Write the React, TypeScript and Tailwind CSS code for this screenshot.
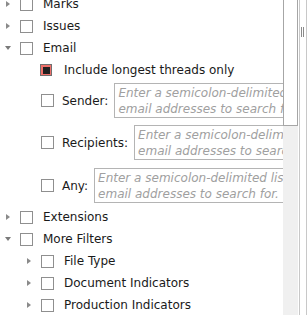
const labelFont = { fontFamily: '"DejaVu Sans", Verdana, sans-serif' }

function Arrow({ open }: { open?: boolean }) {
  if (open) {
    return (
      <span className="ml-[1px] inline-block h-0 w-0 border-l-[3.5px] border-r-[3.5px] border-t-[4px] border-l-transparent border-r-transparent border-t-[#7a7a7a]" />
    )
  }
  return (
    <span className="ml-[2px] inline-block h-0 w-0 border-b-[3.5px] border-l-[4px] border-t-[3.5px] border-b-transparent border-l-[#8a8a8a] border-t-transparent" />
  )
}

function Box({ checked }: { checked?: boolean }) {
  if (checked) {
    return (
      <span className="flex h-[12px] w-[12px] shrink-0 items-center justify-center border border-[#707070] bg-[#f0706a]">
        <span className="h-[7px] w-[7px] bg-[#202020]" />
      </span>
    )
  }
  return <span className="h-[13px] w-[13px] shrink-0 border border-[#8f8f8f] bg-white" />
}

function TreeRow({ label, level = 0, open, arrow = true }: { label: string; level?: number; open?: boolean; arrow?: boolean }) {
  return (
    <div className="flex h-[22px] items-center" style={{ paddingLeft: 4 + level * 21 }}>
      <span className="flex w-[16px] items-center">{arrow && <Arrow open={open} />}</span>
      <Box />
      <span className="ml-[10px] whitespace-nowrap text-[12px] text-[#1a1a1a]" style={labelFont}>
        {label}
      </span>
    </div>
  )
}

function EmailField({ label, className }: { label: string; className: string }) {
  return (
    <div className={`flex items-center pl-[41px] ${className}`}>
      <Box />
      <span className="ml-[8px] mr-[6px] whitespace-nowrap text-[12px] text-[#1a1a1a]" style={labelFont}>
        {label}
      </span>
      <div className="h-[35px] w-[240px] shrink-0 border border-[#b4b4b4] bg-white px-[3px] pt-[1px]">
        <p className="whitespace-nowrap text-[12px] italic leading-[16px] text-[#a0a0a0]" style={labelFont}>
          Enter a semicolon-delimited list of
          <br />
          email addresses to search for.
        </p>
      </div>
    </div>
  )
}

export default function App() {
  return (
    <div className="flex h-[315px] w-[307px] overflow-hidden bg-white">
      <div className="w-[283px] shrink-0 overflow-hidden">
        <div className="mt-[-7px]">
          <TreeRow label="Marks" />
          <TreeRow label="Issues" />
          <TreeRow label="Email" open />
          <div className="flex h-[22px] items-center pl-[40px]">
            <Box checked />
            <span className="ml-[12px] whitespace-nowrap text-[12px] text-[#1a1a1a]" style={labelFont}>
              Include longest threads only
            </span>
          </div>
          <EmailField label="Sender:" className="mt-[2px]" />
          <EmailField label="Recipients:" className="mt-[7px]" />
          <EmailField label="Any:" className="mt-[8px]" />
          <div className="mt-[3px]">
            <TreeRow label="Extensions" />
            <TreeRow label="More Filters" open />
            <TreeRow label="File Type" level={1} />
            <TreeRow label="Document Indicators" level={1} />
            <TreeRow label="Production Indicators" level={1} />
          </div>
        </div>
      </div>
      <div className="w-[15px] shrink-0 bg-[#f0f0f0]">
        <div className="h-[126px] w-[15px] border border-t-0 border-[#a6a6a6] bg-white" />
      </div>
      <div className="ml-[1px] flex w-[8px] shrink-0 border-l border-r border-[#c8c8c8] bg-white">
        <div className="ml-[1px] mt-[27px] flex h-[10px] gap-[1px]">
          <span className="w-[1px] bg-[#8a8a8a]" />
          <span className="w-[1px] bg-[#8a8a8a]" />
        </div>
      </div>
    </div>
  )
}
